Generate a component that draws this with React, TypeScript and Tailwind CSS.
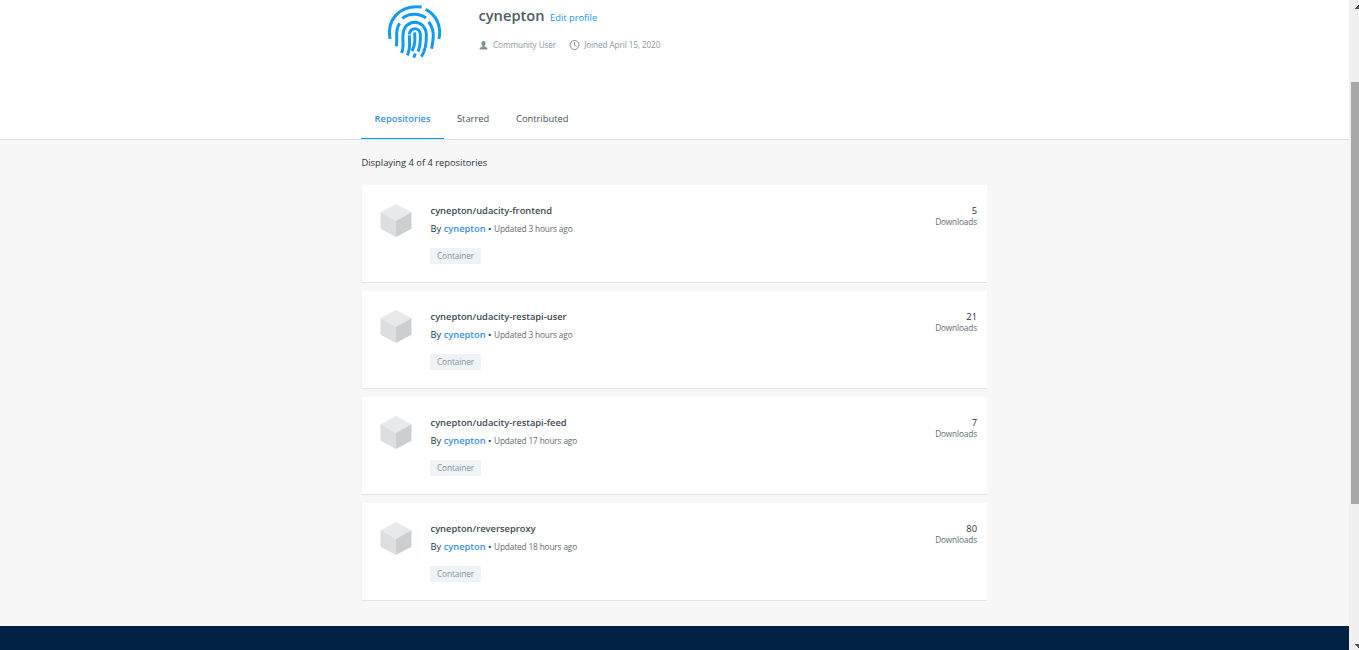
const repositories = [
  { name: 'udacity-frontend', updated: '3 hours ago', downloads: 5 },
  { name: 'udacity-restapi-user', updated: '3 hours ago', downloads: 21 },
  { name: 'udacity-restapi-feed', updated: '17 hours ago', downloads: 7 },
  { name: 'reverseproxy', updated: '18 hours ago', downloads: 80 },
];

function Fingerprint() {
  return (
    <svg className="h-[65px] w-20 shrink-0" viewBox="0 0 240 195" fill="none" stroke="#109cee" strokeWidth="9">
      <path d="M45 117C34 62 72 13 140 21" />
      <path d="M152 28C184 44 200 78 192 117" />
      <path d="M82 55C101 39 132 38 153 54" />
      <path d="M74 70C58 92 69 111 64 139" />
      <path d="M161 66C182 92 174 119 170 146" />
      <path d="M80 159C88 139 82 122 84 103C88 54 151 55 154 103C155 128 152 150 139 170" />
      <path d="M97 166C108 142 103 128 103 106" />
      <path d="M103 103C106 81 134 81 136 103C137 121 136 138 129 155" />
      <path d="M119 97C120 120 121 134 111 153" />
      <path d="M121 161L116 173" />
    </svg>
  );
}

function Cube() {
  return (
    <svg className="h-[33px] w-8 shrink-0" viewBox="0 0 32 33">
      <path d="M16 0 31.5 8.3 16 16.7 .5 8.3Z" fill="#e7e9ea" />
      <path d="M.5 8.3 16 16.7V33L.5 24.7Z" fill="#dcdee0" />
      <path d="M31.5 8.3 16 16.7V33L31.5 24.7Z" fill="#cbcfd2" />
    </svg>
  );
}

function RepositoryCard({ repo }: { repo: (typeof repositories)[number] }) {
  return (
    <article className="flex h-[98px] border-b border-l border-b-[#e2e4e5] border-l-[#f2f3f3] bg-white pl-[18px] pr-[10px] pt-[19px]">
      <Cube />
      <div className="ml-[18px] flex-1">
        <h2 className="h-[14px] pl-[0.5px] text-[9.33px] leading-[14px] font-semibold text-[#3d4a52]">
          cynepton/{repo.name}
        </h2>
        <p className="mt-1 h-[14px] pl-[0.5px] text-[9.33px] leading-[14px] text-[#27343b]">
          By <a className="font-semibold text-[#3991e0]">cynepton</a>{' '}
          <span>•</span> <span className="text-[8.25px] tracking-[-0.13px] text-[#5f6b73]">Updated {repo.updated}</span>
        </p>
        <span className="mt-3 flex h-4 w-[51px] items-center justify-center rounded-[1px] bg-[#eff3f6] text-[8.25px] tracking-[-0.1px] text-[#8595a1]">
          Container
        </span>
      </div>
      <div className="text-right">
        <div className="h-[11px] text-[9.33px] leading-[14px] text-[#27343b]">{repo.downloads}</div>
        <div className="text-[8.25px] leading-[13px] tracking-[-0.13px] text-[#5f6b73]">Downloads</div>
      </div>
    </article>
  );
}

function Scrollbar() {
  return (
    <div className="relative h-[650px] w-[10px] shrink-0 bg-[#f0f0f0]">
      <svg className="absolute inset-0 h-[650px] w-[10px]" viewBox="0 0 10 650" shapeRendering="crispEdges">
        <path d="M5 9 9 5H10V9ZM5 644H10V648H9Z" fill="#505050" />
      </svg>
      <div className="absolute top-[82px] left-[2px] h-[422px] w-2 bg-[#a8a8a8]" />
    </div>
  );
}

export default function App() {
  return (
    <div className="flex h-[650px] w-[1359px] overflow-hidden bg-[#f7f7f7] font-['Open_Sans',sans-serif]">
      <div className="flex min-w-0 flex-1 flex-col">
        <header className="h-[140px] border-b border-[#dfe1e2] bg-white pl-[361px]">
          <div className="flex h-[99px] pl-[14px]">
            <Fingerprint />
            <div className="pl-[23.5px] pt-[5px]">
              <div className="flex h-[22px] items-center gap-[5px]">
                <h1 className="w-[66.5px] pb-[2px] text-[14.67px] font-semibold text-[#505c64]">cynepton</h1>
                <a className="pt-[3px] text-[9.33px] text-[#1595ed]">Edit profile</a>
              </div>
              <div className="mt-[12px] flex h-[13px] items-center text-[8.25px] tracking-[-0.12px] text-[#8d989f]">
                <svg className="mr-[5.5px] h-[9px] w-[9px]" viewBox="0 0 9 9" fill="#7f8e98">
                  <path d="M4.5 0C2.8 0 2.3 1.2 2.6 2.8 2.8 4 3.2 4.6 3.5 4.9V5.7L1.2 6.5Q.5 6.9.5 8.5H8.5Q8.5 6.9 7.8 6.5L5.5 5.7V4.9C5.8 4.6 6.2 4 6.4 2.8 6.7 1.2 6.2 0 4.5 0Z" />
                </svg>
                <span>Community User</span>
                <svg className="mr-1 ml-[13px] h-[11px] w-[11px]" viewBox="0 0 11 11" fill="none" stroke="#7f8e98">
                  <circle cx="5.5" cy="5" r="4.5" />
                  <path d="M5.5 2V5L7.5 6.5" />
                </svg>
                <span>Joined April 15, 2020</span>
              </div>
            </div>
          </div>
          <nav className="flex h-10 text-[9.33px] leading-[40px] text-[#445058]">
            <a className="w-[83px] border-b border-[#0098ef] text-center font-semibold text-[#3991e0]">Repositories</a>
            <a className="w-[59px] pl-[13px]">Starred</a>
            <a className="pl-[13px]">Contributed</a>
          </nav>
        </header>
        <main className="h-[486px] w-[987px] pl-[361px]">
          <p className="h-[45px] pl-[0.5px] pt-[16px] text-[9.33px] leading-[14px] text-[#27343b]">Displaying 4 of 4 repositories</p>
          <div className="flex flex-col gap-2">
            {repositories.map((repo) => (
              <RepositoryCard key={repo.name} repo={repo} />
            ))}
          </div>
        </main>
        <footer className="h-6 bg-[#002044]" />
      </div>
      <Scrollbar />
    </div>
  );
}
